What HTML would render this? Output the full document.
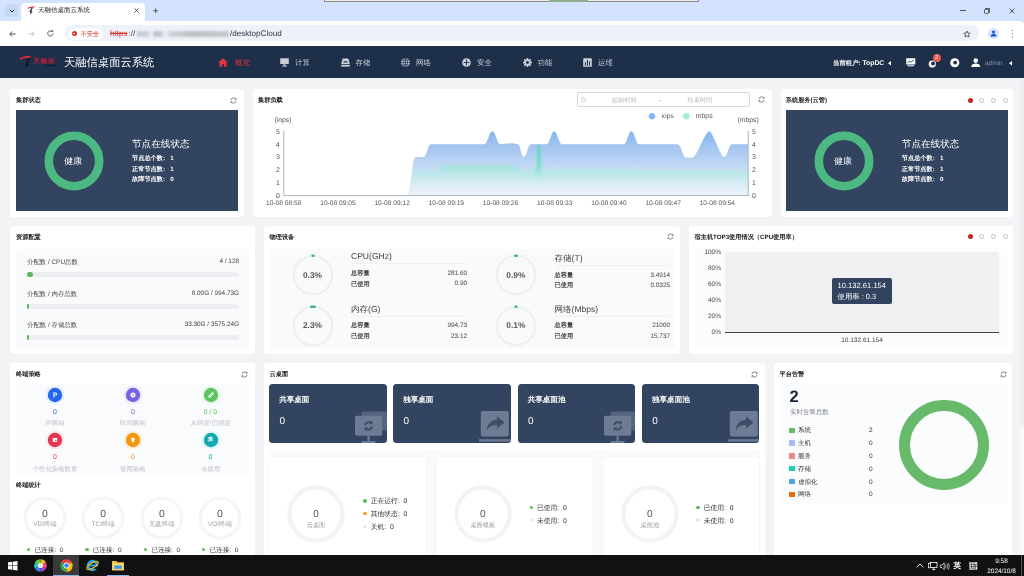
<!DOCTYPE html>
<html><head><meta charset="utf-8">
<style>
*{box-sizing:border-box;margin:0;padding:0}
html,body{width:1024px;height:576px;overflow:hidden;background:#f2f3f5;font-family:"Liberation Sans",sans-serif;text-rendering:geometricPrecision;}
body{position:relative;opacity:0.999}
.abs{position:absolute}
.t{position:absolute;white-space:nowrap;line-height:1;}
.card{position:absolute;background:#fff;border-radius:3px}
.ttl{position:absolute;font-size:6.2px;font-weight:bold;color:#222;white-space:nowrap;line-height:1}
.dark{position:absolute;background:#32445f}
.soft{position:absolute;background:#f9fafb;border-radius:2px}
svg{position:absolute;overflow:visible}
</style></head><body>
<!-- BROWSER CHROME -->
<div class="abs" id="tabbar" style="left:0;top:0;width:1024px;height:22px;background:#d3e3fd"></div>
<div class="abs" style="left:324px;top:0;width:375px;height:2px;background:#eee;border:0.5px solid #888;border-top:0"></div>
<div class="abs" style="left:549px;top:0;width:39px;height:1.5px;background:#8fb08a"></div>
<div class="abs" style="left:5px;top:4px;width:13px;height:13px;border-radius:4px;background:#c5d8f7"></div>
<svg style="left:8.5px;top:8.5px" width="6" height="4" viewBox="0 0 6 4"><path d="M0.8 0.8 L3 3 L5.2 0.8" fill="none" stroke="#333" stroke-width="1"/></svg>
<div class="abs" style="left:21px;top:2.5px;width:124px;height:20px;background:#fff;border-radius:4px 4px 0 0"></div>
<svg style="left:27px;top:6px" width="8" height="9" viewBox="0 0 8 9"><path d="M0.3 2.2 C2 0.8 5 0.3 7.6 0.6 L6.8 1.8 C5.5 1.6 3 1.8 1.2 2.8 Z" fill="#d8232a"/><path d="M4.2 2.2 L5.8 2 L4.2 5 L5.6 5.4 L3 8.8 L3.6 6 L2.4 5.6 Z" fill="#1a2238"/></svg>
<div class="t" style="left:38px;top:8.40px;font-size:6.5px;color:#222">天融信桌面云系统</div>
<svg style="left:134px;top:8px" width="5" height="5" viewBox="0 0 5 5"><path d="M0.5 0.5 L4.5 4.5 M4.5 0.5 L0.5 4.5" stroke="#333" stroke-width="0.8"/></svg>
<svg style="left:152.5px;top:8px" width="5.5" height="5.5" viewBox="0 0 6 6"><path d="M3 0.3 V5.7 M0.3 3 H5.7" stroke="#333" stroke-width="0.8"/></svg>
<!-- window controls -->
<div class="abs" style="left:959.5px;top:10.3px;width:6px;height:0.8px;background:#555"></div>
<svg style="left:984px;top:8px" width="6" height="6" viewBox="0 0 6 6"><rect x="0.5" y="1.4" width="4" height="4" rx="0.8" fill="none" stroke="#333" stroke-width="0.8"/><path d="M1.6 1.2 V0.5 H5.5 V4.4 H4.8" fill="none" stroke="#333" stroke-width="0.8"/></svg>
<svg style="left:1009px;top:8px" width="6" height="6" viewBox="0 0 6 6"><path d="M0.5 0.5 L5.5 5.5 M5.5 0.5 L0.5 5.5" stroke="#333" stroke-width="0.8"/></svg>
<!-- address bar -->
<div class="abs" style="left:0;top:21px;width:1024px;height:25px;background:#fff;border-radius:0 5px 0 0"></div>
<svg style="left:8.5px;top:30.5px" width="7" height="6" viewBox="0 0 7 6"><path d="M6.6 3 H0.8 M3.2 0.5 L0.7 3 L3.2 5.5" fill="none" stroke="#444" stroke-width="0.9"/></svg>
<svg style="left:27.5px;top:30.5px" width="7" height="6" viewBox="0 0 7 6"><path d="M0.4 3 H6.2 M3.8 0.5 L6.3 3 L3.8 5.5" fill="none" stroke="#bbb" stroke-width="0.9"/></svg>
<svg style="left:46.5px;top:30px" width="7" height="7" viewBox="0 0 7 7"><path d="M6 3.5 A2.6 2.6 0 1 1 5.2 1.6" fill="none" stroke="#444" stroke-width="0.9"/><path d="M4 0.4 H6.2 V2.6 Z" fill="#444"/></svg>
<div class="abs" style="left:65px;top:25.2px;width:914px;height:16.2px;border-radius:8px;background:#edf2fa"></div>
<div class="abs" style="left:68px;top:27.5px;width:35px;height:12px;border-radius:6px;background:#fff"></div>
<div class="abs" style="left:71.5px;top:31px;width:5px;height:5px;border-radius:50%;background:#d93025"></div>
<div class="abs" style="left:73.2px;top:32.6px;width:1.6px;height:1.8px;background:#fff;border-radius:50%"></div>
<div class="t" style="left:80.5px;top:32.30px;font-size:6.3px;color:#d93025">不安全</div>
<div class="t" style="left:110px;top:29.8px;font-size:8px;color:#d93025;text-decoration:line-through">https</div>
<div class="t" style="left:128.6px;top:29.6px;font-size:8px;color:#444">://</div>
<div class="abs" style="left:137px;top:31px;width:92px;height:5.5px;filter:blur(1.3px);background:linear-gradient(90deg,#aaa 0,#bbb 12%,#e4e8ee 14%,#e4e8ee 17%,#999 19%,#aaa 27%,#e4e8ee 29%,#e4e8ee 33%,#bbb 35%,#999 60%,#aaa 100%);opacity:.55"></div>
<div class="t" style="left:230px;top:29.5px;font-size:8.1px;color:#333">/desktopCloud</div>
<svg style="left:962.5px;top:29.5px" width="8" height="8" viewBox="0 0 24 24"><path d="M12 3 L14.8 9.2 L21.5 9.9 L16.5 14.4 L17.9 21 L12 17.6 L6.1 21 L7.5 14.4 L2.5 9.9 L9.2 9.2 Z" fill="none" stroke="#333" stroke-width="2.2" stroke-linejoin="round"/></svg>
<div class="abs" style="left:987.5px;top:28px;width:11px;height:11px;border-radius:50%;background:#d3e3fd"></div>
<svg style="left:989.5px;top:30px" width="7" height="7" viewBox="0 0 7 7"><circle cx="3.5" cy="2" r="1.5" fill="#0b57d0"/><path d="M0.6 6.6 C0.6 4.6 2 4 3.5 4 C5 4 6.4 4.6 6.4 6.6 Z" fill="#0b57d0"/></svg>
<div class="abs" style="left:1011.7px;top:29.6px;width:1.4px;height:1.4px;border-radius:50%;background:#444;box-shadow:0 3.3px 0 #444,0 6.6px 0 #444"></div>
<!-- NAV -->
<div class="abs" id="nav" style="left:0;top:45.8px;width:1024px;height:32px;background:#1e2f4a"></div>

<!-- logo -->
<svg style="left:19px;top:55px" width="13" height="13" viewBox="0 0 13 13"><path d="M0.3 3.6 C3 1.4 8 0.4 12.2 0.7 L11 2.7 C8.4 2.5 4.6 3 1.6 4.7 Z" fill="#e0283a"/><path d="M10 2.8 L11.7 2.9 L8.7 8.3 L10.1 8.8 L6.2 12.9 L7.3 9.7 L5.9 9.2 Z" fill="#0c1325"/></svg>
<div class="t" style="left:33.2px;top:58.6px;font-size:6.6px;font-weight:bold;color:#b8213a;letter-spacing:0.7px">天融信</div><div class="abs" style="left:44.5px;top:64.9px;width:10.8px;height:1.5px;background:#0c1325;opacity:.9"></div>
<div class="t" style="left:64px;top:57.50px;font-size:11.3px;color:#fff">天融信桌面云系统</div>
<!-- nav items -->
<svg style="left:217.5px;top:57.5px" width="10" height="9" viewBox="0 0 10 9"><path d="M5 0.2 L9.8 4.4 H8.5 V8.8 H5.9 V6 H4.1 V8.8 H1.5 V4.4 H0.2 Z" fill="#e8343a"/></svg>
<div class="t" style="left:235px;top:58.6px;font-size:7.4px;color:#e8343a">概览</div>
<svg style="left:280px;top:57.5px" width="9" height="9" viewBox="0 0 9 9"><rect x="0.2" y="0.3" width="8.6" height="5.8" rx="0.5" fill="#c9ced8"/><rect x="3.5" y="6.1" width="2" height="1.5" fill="#c9ced8"/><rect x="2" y="7.6" width="5" height="1" fill="#c9ced8"/></svg>
<div class="t" style="left:295px;top:58.6px;font-size:7.4px;color:#c9ced8">计算</div>
<svg style="left:340.5px;top:57.5px" width="9" height="9" viewBox="0 0 9 9"><path d="M1.6 0.4 H7.4 L8.8 6 H0.2 Z" fill="#c9ced8"/><rect x="2.6" y="3.2" width="3.8" height="1.2" fill="#1e2f4a"/><rect x="0.2" y="6.8" width="8.6" height="1.8" fill="#c9ced8"/></svg>
<div class="t" style="left:355.5px;top:58.6px;font-size:7.4px;color:#c9ced8">存储</div>
<svg style="left:401px;top:57.8px" width="9" height="9" viewBox="0 0 9 9"><circle cx="4.5" cy="4.5" r="4.3" fill="#c9ced8"/><path d="M4.5 0.2 V8.8 M0.2 4.5 H8.8 M1.2 2.2 H7.8 M1.2 6.8 H7.8" stroke="#1e2f4a" stroke-width="0.7"/><ellipse cx="4.5" cy="4.5" rx="2" ry="4.3" fill="none" stroke="#1e2f4a" stroke-width="0.7"/></svg>
<div class="t" style="left:416px;top:58.6px;font-size:7.4px;color:#c9ced8">网络</div>
<svg style="left:462px;top:57.8px" width="9" height="9" viewBox="0 0 9 9"><circle cx="4.5" cy="4.5" r="4.3" fill="#c9ced8"/><path d="M4.5 1.6 V7.4 M1.6 4.5 H7.4" stroke="#1e2f4a" stroke-width="0.9"/></svg>
<div class="t" style="left:477px;top:58.6px;font-size:7.4px;color:#c9ced8">安全</div>
<svg style="left:522.5px;top:57.8px" width="9" height="9" viewBox="0 0 9 9"><g fill="#c9ced8"><circle cx="4.5" cy="4.5" r="3.2"/><rect x="3.7" y="0" width="1.6" height="9"/><rect x="0" y="3.7" width="9" height="1.6"/><rect x="3.7" y="0" width="1.6" height="9" transform="rotate(45 4.5 4.5)"/><rect x="3.7" y="0" width="1.6" height="9" transform="rotate(-45 4.5 4.5)"/></g><circle cx="4.5" cy="4.5" r="1.4" fill="#1e2f4a"/></svg>
<div class="t" style="left:537.5px;top:58.6px;font-size:7.4px;color:#c9ced8">功能</div>
<svg style="left:583px;top:57.8px" width="9" height="9" viewBox="0 0 9 9"><rect x="0.2" y="0.2" width="8.6" height="8.6" rx="0.6" fill="#c9ced8"/><path d="M2.4 7.6 V4.2 M4.5 7.6 V2 M6.6 7.6 V3.4" stroke="#1e2f4a" stroke-width="1"/></svg>
<div class="t" style="left:598px;top:58.6px;font-size:7.4px;color:#c9ced8">运维</div>
<!-- nav right -->
<div class="t" style="left:833px;top:61.00px;font-size:6.4px;font-weight:bold;color:#fff">当前租户: <span style="font-size:6.8px">TopDC</span></div>
<svg style="left:887.5px;top:61px" width="3" height="4.5" viewBox="0 0 3 4.5"><path d="M3 0 V4.5 L0 2.25 Z" fill="#fff"/></svg>
<svg style="left:906px;top:58.3px" width="9.5" height="8.5" viewBox="0 0 9.5 8.5"><rect x="0.2" y="0.2" width="9.1" height="6.4" rx="0.6" fill="#fff"/><path d="M1.4 4.8 L3.4 3 L5 4.2 L8 1.8" fill="none" stroke="#1e2f4a" stroke-width="0.8"/><rect x="1.4" y="7.3" width="6.7" height="1" fill="#fff"/></svg>
<svg style="left:927.5px;top:58.5px" width="9" height="9" viewBox="0 0 9 9"><circle cx="4.3" cy="5" r="3.6" fill="#fff"/><circle cx="5" cy="4.4" r="2" fill="#1e2f4a"/></svg>
<div class="abs" style="left:932.6px;top:54.2px;width:8.2px;height:8.2px;border-radius:50%;background:#ee5a52"></div>
<div class="t" style="left:935px;top:55.6px;font-size:5.6px;color:#fff">2</div>
<svg style="left:949.5px;top:58px" width="9.5" height="9.5" viewBox="0 0 10 10"><circle cx="5" cy="5" r="4.8" fill="#fff"/><circle cx="5.4" cy="4.8" r="2" fill="#1e2f4a"/></svg>
<svg style="left:971px;top:57.8px" width="9.5" height="9.5" viewBox="0 0 9.5 9.5"><circle cx="4.75" cy="2.6" r="2.3" fill="#fff"/><path d="M0.3 9 C0.3 6.2 2.4 5.4 4.75 5.4 C7.1 5.4 9.2 6.2 9.2 9 Z" fill="#fff"/></svg>
<div class="t" style="left:985px;top:60.70px;font-size:6.5px;color:#8792a6">admin</div>
<svg style="left:1008.5px;top:61px" width="3" height="4.5" viewBox="0 0 3 4.5"><path d="M3 0 V4.5 L0 2.25 Z" fill="#fff"/></svg>
<!-- scrollbar -->
<div class="abs" style="left:1019.5px;top:78px;width:4.5px;height:477px;background:#f8f9fb"></div>
<div class="abs" style="left:1019.5px;top:78px;width:4.5px;height:349px;background:#eceef2"></div>
<!--ROW1-->

<div class="card" style="left:10px;top:89px;width:234px;height:128px"></div>
<div class="ttl" style="left:16px;top:97.90px">集群状态</div>
<svg style="left:230.0px;top:96.5px" width="7" height="7" viewBox="0 0 14 14"><path d="M2 6.2 A5.1 5.1 0 0 1 11.4 4.2" fill="none" stroke="#444" stroke-width="1.3"/><path d="M12 7.8 A5.1 5.1 0 0 1 2.6 9.8" fill="none" stroke="#444" stroke-width="1.3"/><path d="M12.6 1.6 V5 H9.2 Z" fill="#444"/><path d="M1.4 12.4 V9 H4.8 Z" fill="#444"/></svg>

<div class="dark" style="left:16px;top:110px;width:222px;height:100.5px"></div>
<svg style="left:43.8px;top:130.5px" width="60" height="60" viewBox="0 0 60 60"><circle cx="30" cy="30" r="25.2" fill="none" stroke="#4cb982" stroke-width="8.6"/></svg>
<div class="t" style="left:64.3px;top:156.90px;font-size:9px;color:#fff">健康</div>
<div class="t" style="left:132px;top:139.70px;font-size:9.6px;color:#fff">节点在线状态</div>
<div class="t" style="left:132px;top:155.90px;font-size:6.2px;font-weight:bold;color:#fff">节点总个数: &nbsp;&nbsp;1</div>
<div class="t" style="left:132px;top:166.50px;font-size:6.2px;font-weight:bold;color:#fff">正常节点数: &nbsp;&nbsp;1</div>
<div class="t" style="left:132px;top:177.10px;font-size:6.2px;font-weight:bold;color:#fff">故障节点数: &nbsp;&nbsp;0</div>

<div class="card" style="left:252.5px;top:89px;width:519.5px;height:128px"></div>
<div class="ttl" style="left:258px;top:97.90px">集群负载</div>
<div class="abs" style="left:577.2px;top:92.2px;width:173.3px;height:15.2px;border:0.7px solid #d4d7de;border-radius:2px;background:#fff"></div>
<svg style="left:580.6px;top:97.2px" width="5.4" height="5.4" viewBox="0 0 10 10"><circle cx="5" cy="5" r="4.3" fill="none" stroke="#b5b8be" stroke-width="1"/><path d="M5 2.4 V5.2 L6.8 6.2" fill="none" stroke="#b5b8be" stroke-width="1"/></svg>
<div class="t" style="left:612px;top:97.9px;font-size:6.2px;color:#b0b3b9">起始时间</div>
<div class="t" style="left:659px;top:97.7px;font-size:6.2px;color:#666">-</div>
<div class="t" style="left:687.5px;top:97.9px;font-size:6.2px;color:#b0b3b9">结束时间</div>
<svg style="left:758.0px;top:96.3px" width="7" height="7" viewBox="0 0 14 14"><path d="M2 6.2 A5.1 5.1 0 0 1 11.4 4.2" fill="none" stroke="#444" stroke-width="1.3"/><path d="M12 7.8 A5.1 5.1 0 0 1 2.6 9.8" fill="none" stroke="#444" stroke-width="1.3"/><path d="M12.6 1.6 V5 H9.2 Z" fill="#444"/><path d="M1.4 12.4 V9 H4.8 Z" fill="#444"/></svg>
<svg style="left:0;top:0" width="1024" height="576" viewBox="0 0 1024 576">
<defs>
<linearGradient id="gi" x1="0" y1="0" x2="0" y2="1" gradientUnits="userSpaceOnUse"><stop offset="0" stop-color="#7fb0f0" stop-opacity="0"/></linearGradient>
<clipPath id="ci"><path d="M407.4 195.6 C410.8 195.6 412.1 157.05 415.5 157.05 L423.7 157.05 C426.68 157.05 427.82 144.2 430.8 144.2 L484.4 144.2 C487.72 144.2 488.98 131.35 492.3 131.35 C495.62 131.35 496.88 144.2 500.2 144.2 C502.91 144.2 509.79 143.17 512.5 143.17 C514.81 143.17 515.69 144.2 518 144.2 C520.35 144.2 521.25 157.05 523.6 157.05 C526.71 157.05 527.89 144.2 531 144.2 L546.8 144.2 C549.91 144.2 551.09 131.35 554.2 131.35 C557.35 131.35 558.55 144.2 561.7 144.2 L624 144.2 C627.07 144.2 628.23 131.35 631.3 131.35 C634.49 131.35 635.71 144.2 638.9 144.2 L677.6 144.2 C681.25 144.2 682.65 157.69 686.3 157.69 L692.5 157.69 C696.17 157.69 705.53 131.35 709.2 131.35 C712.48 131.35 720.82 157.05 724.1 157.05 C727.42 157.05 728.68 144.2 732 144.2 L747.9 144.2 L747.9 195.6 L407.4 195.6 Z"/></clipPath><filter id="bl" x="-5%" y="-20%" width="110%" height="140%"><feGaussianBlur stdDeviation="1.6 1.8"/></filter>
<linearGradient id="gI" x1="0" y1="131" x2="0" y2="195.6" gradientUnits="userSpaceOnUse"><stop offset="0" stop-color="#86b5ee"/><stop offset="0.25" stop-color="#a3c5f0"/><stop offset="0.55" stop-color="#c3d9f4"/><stop offset="1" stop-color="#e7eff8"/></linearGradient>
<linearGradient id="gS" x1="0" y1="143" x2="0" y2="184" gradientUnits="userSpaceOnUse"><stop offset="0" stop-color="#55d2ba" stop-opacity="0.95"/><stop offset="0.6" stop-color="#7fe0cc" stop-opacity="0.6"/><stop offset="1" stop-color="#a8ecd9" stop-opacity="0"/></linearGradient>
<linearGradient id="gM" x1="0" y1="144" x2="0" y2="195.6" gradientUnits="userSpaceOnUse"><stop offset="0" stop-color="#45ccb0" stop-opacity="0.95"/><stop offset="0.42" stop-color="#8fe8d0" stop-opacity="0.7"/><stop offset="0.7" stop-color="#c9f2ea" stop-opacity="0.5"/><stop offset="1" stop-color="#ffffff" stop-opacity="0.25"/></linearGradient>
</defs>
<path d="M407.4 195.6 C410.8 195.6 412.1 157.05 415.5 157.05 L423.7 157.05 C426.68 157.05 427.82 144.2 430.8 144.2 L484.4 144.2 C487.72 144.2 488.98 131.35 492.3 131.35 C495.62 131.35 496.88 144.2 500.2 144.2 C502.91 144.2 509.79 143.17 512.5 143.17 C514.81 143.17 515.69 144.2 518 144.2 C520.35 144.2 521.25 157.05 523.6 157.05 C526.71 157.05 527.89 144.2 531 144.2 L546.8 144.2 C549.91 144.2 551.09 131.35 554.2 131.35 C557.35 131.35 558.55 144.2 561.7 144.2 L624 144.2 C627.07 144.2 628.23 131.35 631.3 131.35 C634.49 131.35 635.71 144.2 638.9 144.2 L677.6 144.2 C681.25 144.2 682.65 157.69 686.3 157.69 L692.5 157.69 C696.17 157.69 705.53 131.35 709.2 131.35 C712.48 131.35 720.82 157.05 724.1 157.05 C727.42 157.05 728.68 144.2 732 144.2 L747.9 144.2 L747.9 195.6 L407.4 195.6 Z" fill="url(#gI)"/>
<g clip-path="url(#ci)"><path d="M407.4 195.6 C411.01 195.6 412.39 171.19 416 171.19 C420.4 171.19 431.6 169.9 436 169.9 C440.2 169.9 441.8 165.4 446 165.4 L512 165.4 C516.2 165.4 517.8 169.9 522 169.9 L534.8 169.9 C536.52 169.9 537.18 142.91 538.9 142.91 C540.62 142.91 541.28 169.9 543 169.9 C555.54 169.9 587.46 169.26 600 169.26 C617.6 169.26 662.4 170.54 680 170.54 L747.9 170.54 L747.9 195.6 L407.4 195.6 Z" fill="url(#gM)" filter="url(#bl)"/></g>
<path d="M535.2 172 C537.4 168 538 150 538.9 143.6 C539.8 150 540.6 168 543 176 L543 184 L535.2 184 Z" fill="url(#gS)"/>
<path d="M283.8 131 V195.6 H748.2 V131" fill="none" stroke="#aab5bf" stroke-width="1"/>
<g stroke="#a9b3bd" stroke-width="0.6"><path d="M748.2 195.6 h1.6"/><path d="M748.2 182.75 h1.6"/><path d="M748.2 169.9 h1.6"/><path d="M748.2 157.05 h1.6"/><path d="M748.2 144.2 h1.6"/><path d="M748.2 131.35 h1.6"/></g>
<line x1="646" y1="116.2" x2="658" y2="116.2" stroke="#d4e3f8" stroke-width="0.7"/><circle cx="652" cy="116.2" r="3.2" fill="#8ab6f1"/>
<line x1="680.3" y1="116.2" x2="692.3" y2="116.2" stroke="#d9f5ec" stroke-width="0.7"/><circle cx="686.3" cy="116.2" r="3.2" fill="#a5ead2"/>
</svg>
<div class="t" style="left:661.5px;top:113.90px;font-size:6.7px;color:#555">iops</div>
<div class="t" style="left:695.8px;top:113.90px;font-size:6.9px;color:#555">mbps</div>
<div class="t" style="left:274.5px;top:118.20px;font-size:6.8px;color:#555">(iops)</div>
<div class="t" style="left:737.5px;top:118.20px;font-size:6.8px;color:#555">(mbps)</div>
<div class="t" style="left:276px;top:193.90px;font-size:6.9px;color:#555">0</div><div class="t" style="left:752px;top:193.90px;font-size:6.9px;color:#555">0</div>
<div class="t" style="left:276px;top:181.05px;font-size:6.9px;color:#555">1</div><div class="t" style="left:752px;top:181.05px;font-size:6.9px;color:#555">1</div>
<div class="t" style="left:276px;top:168.20px;font-size:6.9px;color:#555">2</div><div class="t" style="left:752px;top:168.20px;font-size:6.9px;color:#555">2</div>
<div class="t" style="left:276px;top:155.35px;font-size:6.9px;color:#555">3</div><div class="t" style="left:752px;top:155.35px;font-size:6.9px;color:#555">3</div>
<div class="t" style="left:276px;top:142.50px;font-size:6.9px;color:#555">4</div><div class="t" style="left:752px;top:142.50px;font-size:6.9px;color:#555">4</div>
<div class="t" style="left:276px;top:129.65px;font-size:6.9px;color:#555">5</div><div class="t" style="left:752px;top:129.65px;font-size:6.9px;color:#555">5</div>
<div class="t" style="left:253.75px;width:60px;text-align:center;top:200.7px;font-size:6.65px;color:#555">10-08 08:58</div>
<div class="t" style="left:307.95px;width:60px;text-align:center;top:200.7px;font-size:6.65px;color:#555">10-08 09:05</div>
<div class="t" style="left:362.15px;width:60px;text-align:center;top:200.7px;font-size:6.65px;color:#555">10-08 09:12</div>
<div class="t" style="left:416.35px;width:60px;text-align:center;top:200.7px;font-size:6.65px;color:#555">10-08 09:19</div>
<div class="t" style="left:470.55px;width:60px;text-align:center;top:200.7px;font-size:6.65px;color:#555">10-08 09:26</div>
<div class="t" style="left:524.75px;width:60px;text-align:center;top:200.7px;font-size:6.65px;color:#555">10-08 09:33</div>
<div class="t" style="left:578.95px;width:60px;text-align:center;top:200.7px;font-size:6.65px;color:#555">10-08 09:40</div>
<div class="t" style="left:633.15px;width:60px;text-align:center;top:200.7px;font-size:6.65px;color:#555">10-08 09:47</div>
<div class="t" style="left:687.35px;width:60px;text-align:center;top:200.7px;font-size:6.65px;color:#555">10-08 09:54</div>

<div class="card" style="left:780.5px;top:89px;width:232px;height:128px"></div>
<div class="ttl" style="left:785.8px;top:97.90px">系统服务(云管)</div>
<div class="abs" style="left:967.5px;top:97.5px;width:5px;height:5px;border-radius:50%;background:#c0272d"></div>
<div class="abs" style="left:979px;top:97.5px;width:5px;height:5px;border-radius:50%;border:0.6px solid #bbb;background:#fff"></div>
<div class="abs" style="left:991px;top:97.5px;width:5px;height:5px;border-radius:50%;border:0.6px solid #bbb;background:#fff"></div>
<div class="abs" style="left:1002.5px;top:97.5px;width:5px;height:5px;border-radius:50%;border:0.6px solid #bbb;background:#fff"></div>

<div class="dark" style="left:785.8px;top:110px;width:222px;height:100.5px"></div>
<svg style="left:813.5999999999999px;top:130.5px" width="60" height="60" viewBox="0 0 60 60"><circle cx="30" cy="30" r="25.2" fill="none" stroke="#4cb982" stroke-width="8.6"/></svg>
<div class="t" style="left:834.0999999999999px;top:156.90px;font-size:9px;color:#fff">健康</div>
<div class="t" style="left:901.8px;top:139.70px;font-size:9.6px;color:#fff">节点在线状态</div>
<div class="t" style="left:901.8px;top:155.90px;font-size:6.2px;font-weight:bold;color:#fff">节点总个数: &nbsp;&nbsp;1</div>
<div class="t" style="left:901.8px;top:166.50px;font-size:6.2px;font-weight:bold;color:#fff">正常节点数: &nbsp;&nbsp;1</div>
<div class="t" style="left:901.8px;top:177.10px;font-size:6.2px;font-weight:bold;color:#fff">故障节点数: &nbsp;&nbsp;0</div>

<!--ROW2-->

<div class="card" style="left:10px;top:226px;width:244.5px;height:128px"></div>
<div class="ttl" style="left:16px;top:235.10px">资源配置</div>
<div class="soft" style="left:16px;top:248.5px;width:232.5px;height:100px"></div>
<div class="t" style="left:27px;top:260.00px;font-size:6.4px;color:#444">分配数 / CPU总数</div>
<div class="t" style="left:139px;width:100px;text-align:right;top:259.40px;font-size:6.4px;color:#444">4 / 128</div>
<div class="abs" style="left:27px;top:272.2px;width:212px;height:5px;border-radius:2.5px;background:#eceef1"></div>
<div class="abs" style="left:27px;top:272.2px;width:6px;height:5px;border-radius:2.5px;background:#5cb85c"></div>
<div class="t" style="left:27px;top:291.50px;font-size:6.4px;color:#444">分配数 / 内存总数</div>
<div class="t" style="left:139px;width:100px;text-align:right;top:290.90px;font-size:6.4px;color:#444">8.00G / 994.73G</div>
<div class="abs" style="left:27px;top:303.7px;width:212px;height:5px;border-radius:2.5px;background:#eceef1"></div>
<div class="abs" style="left:27px;top:303.7px;width:2px;height:5px;border-radius:2.5px;background:#5cb85c"></div>
<div class="t" style="left:27px;top:323.00px;font-size:6.4px;color:#444">分配数 / 存储总数</div>
<div class="t" style="left:139px;width:100px;text-align:right;top:322.40px;font-size:6.4px;color:#444">33.30G / 3575.24G</div>
<div class="abs" style="left:27px;top:335.2px;width:212px;height:5px;border-radius:2.5px;background:#eceef1"></div>
<div class="abs" style="left:27px;top:335.2px;width:2px;height:5px;border-radius:2.5px;background:#5cb85c"></div>

<div class="card" style="left:264px;top:226px;width:416px;height:128px"></div>
<div class="ttl" style="left:269.5px;top:235.10px">物理设备</div>
<svg style="left:667.0px;top:233.0px" width="7" height="7" viewBox="0 0 14 14"><path d="M2 6.2 A5.1 5.1 0 0 1 11.4 4.2" fill="none" stroke="#444" stroke-width="1.3"/><path d="M12 7.8 A5.1 5.1 0 0 1 2.6 9.8" fill="none" stroke="#444" stroke-width="1.3"/><path d="M12.6 1.6 V5 H9.2 Z" fill="#444"/><path d="M1.4 12.4 V9 H4.8 Z" fill="#444"/></svg>
<div class="soft" style="left:269.5px;top:248.5px;width:405px;height:100px"></div>
<svg style="left:291.5px;top:254px" width="42" height="42" viewBox="0 0 42 42"><circle cx="21" cy="21" r="19.2" fill="none" stroke="#eef0f2" stroke-width="2.3"/><path d="M20.6 1.8 L21.4 1.8" fill="none" stroke="#3cb38a" stroke-width="2.6" stroke-linecap="round"/></svg>
<div class="t" style="left:292.5px;width:40px;text-align:center;top:271px;font-size:8.4px;font-weight:bold;color:#555">0.3%</div>
<div class="t" style="left:351px;top:251.7px;font-size:8.55px;color:#444">CPU(GHz)</div>
<div class="abs" style="left:351px;top:263.1px;width:116px;height:0.6px;background:#eff0f2"></div>
<div class="t" style="left:351px;top:271.10px;font-size:6.2px;font-weight:bold;color:#444">总容量</div>
<div class="t" style="left:351px;top:281.60px;font-size:6.2px;font-weight:bold;color:#444">已使用</div>
<div class="t" style="left:407px;width:60px;text-align:right;top:270.90px;font-size:6.4px;color:#444">281.60</div>
<div class="t" style="left:407px;width:60px;text-align:right;top:281.40px;font-size:6.4px;color:#444">0.90</div>
<svg style="left:291.5px;top:304.5px" width="42" height="42" viewBox="0 0 42 42"><circle cx="21" cy="21" r="19.2" fill="none" stroke="#eef0f2" stroke-width="2.3"/><path d="M19.4 1.8 L22.6 1.8" fill="none" stroke="#3cb38a" stroke-width="2.6" stroke-linecap="round"/></svg>
<div class="t" style="left:292.5px;width:40px;text-align:center;top:320.70px;font-size:8.4px;font-weight:bold;color:#555">2.3%</div>
<div class="t" style="left:351px;top:304.90px;font-size:8.55px;color:#444">内存(G)</div>
<div class="abs" style="left:351px;top:315.6px;width:116px;height:0.6px;background:#eff0f2"></div>
<div class="t" style="left:351px;top:323.30px;font-size:6.2px;font-weight:bold;color:#444">总容量</div>
<div class="t" style="left:351px;top:334.10px;font-size:6.2px;font-weight:bold;color:#444">已使用</div>
<div class="t" style="left:407px;width:60px;text-align:right;top:323.10px;font-size:6.4px;color:#444">994.73</div>
<div class="t" style="left:407px;width:60px;text-align:right;top:333.90px;font-size:6.4px;color:#444">23.12</div>
<svg style="left:494.79999999999995px;top:254px" width="42" height="42" viewBox="0 0 42 42"><circle cx="21" cy="21" r="19.2" fill="none" stroke="#eef0f2" stroke-width="2.3"/><path d="M20.4 1.8 L21.6 1.8" fill="none" stroke="#3cb38a" stroke-width="2.6" stroke-linecap="round"/></svg>
<div class="t" style="left:495.79999999999995px;width:40px;text-align:center;top:271px;font-size:8.4px;font-weight:bold;color:#555">0.9%</div>
<div class="t" style="left:554.5px;top:253.7px;font-size:8.55px;color:#444">存储(T)</div>
<div class="abs" style="left:554.5px;top:265.1px;width:115.5px;height:0.6px;background:#eff0f2"></div>
<div class="t" style="left:554.5px;top:272.90px;font-size:6.2px;font-weight:bold;color:#444">总容量</div>
<div class="t" style="left:554.5px;top:283.10px;font-size:6.2px;font-weight:bold;color:#444">已使用</div>
<div class="t" style="left:610px;width:60px;text-align:right;top:272.70px;font-size:6.4px;color:#444">3.4914</div>
<div class="t" style="left:610px;width:60px;text-align:right;top:282.90px;font-size:6.4px;color:#444">0.0325</div>
<svg style="left:494.79999999999995px;top:304.5px" width="42" height="42" viewBox="0 0 42 42"><circle cx="21" cy="21" r="19.2" fill="none" stroke="#eef0f2" stroke-width="2.3"/><path d="M20.7 1.8 L21.3 1.8" fill="none" stroke="#3cb38a" stroke-width="2.6" stroke-linecap="round"/></svg>
<div class="t" style="left:495.79999999999995px;width:40px;text-align:center;top:320.70px;font-size:8.4px;font-weight:bold;color:#555">0.1%</div>
<div class="t" style="left:554.5px;top:304.90px;font-size:8.55px;color:#444">网络(Mbps)</div>
<div class="abs" style="left:554.5px;top:315.6px;width:115.5px;height:0.6px;background:#eff0f2"></div>
<div class="t" style="left:554.5px;top:323.30px;font-size:6.2px;font-weight:bold;color:#444">总容量</div>
<div class="t" style="left:554.5px;top:334.10px;font-size:6.2px;font-weight:bold;color:#444">已使用</div>
<div class="t" style="left:610px;width:60px;text-align:right;top:323.10px;font-size:6.4px;color:#444">21000</div>
<div class="t" style="left:610px;width:60px;text-align:right;top:333.90px;font-size:6.4px;color:#444">15.737</div>

<div class="card" style="left:689px;top:226px;width:323.5px;height:128px"></div>
<div class="ttl" style="left:694.5px;top:235.10px">宿主机TOP3使用情况（CPU使用率）</div>
<div class="abs" style="left:967.5px;top:233.8px;width:5px;height:5px;border-radius:50%;background:#c0272d"></div>
<div class="abs" style="left:979px;top:233.8px;width:5px;height:5px;border-radius:50%;border:0.6px solid #bbb;background:#fff"></div>
<div class="abs" style="left:991px;top:233.8px;width:5px;height:5px;border-radius:50%;border:0.6px solid #bbb;background:#fff"></div>
<div class="abs" style="left:1002.5px;top:233.8px;width:5px;height:5px;border-radius:50%;border:0.6px solid #bbb;background:#fff"></div>
<div class="soft" style="left:694.5px;top:248.5px;width:312.5px;height:100px;background:#fbfcfd"></div>
<div class="abs" style="left:725px;top:252px;width:273.5px;height:80.3px;background:#eff0f2"></div>
<div class="abs" style="left:725px;top:332.2px;width:273.5px;height:0.8px;background:#444"></div>
<div class="t" style="left:690px;width:31px;text-align:right;top:249.60px;font-size:6.5px;color:#444">100%</div>
<div class="t" style="left:690px;width:31px;text-align:right;top:265.60px;font-size:6.5px;color:#444">80%</div>
<div class="t" style="left:690px;width:31px;text-align:right;top:281.60px;font-size:6.5px;color:#444">60%</div>
<div class="t" style="left:690px;width:31px;text-align:right;top:297.60px;font-size:6.5px;color:#444">40%</div>
<div class="t" style="left:690px;width:31px;text-align:right;top:313.60px;font-size:6.5px;color:#444">20%</div>
<div class="t" style="left:690px;width:31px;text-align:right;top:329.60px;font-size:6.5px;color:#444">0%</div>
<div class="abs" style="left:832px;top:277.8px;width:60px;height:26.4px;border-radius:2px;background:#32445f"></div>
<div class="t" style="left:837.5px;top:282.00px;font-size:7.6px;color:#fff">10.132.61.154</div>
<div class="t" style="left:837.5px;top:293.00px;font-size:7.4px;color:#fff">使用率 : 0.3</div>
<div class="t" style="left:832px;width:60px;text-align:center;top:337.8px;font-size:6.5px;color:#444">10.132.61.154</div>
<!--ROW3-->

<div class="card" style="left:10px;top:362.5px;width:244.5px;height:200px"></div>
<div class="ttl" style="left:16px;top:371.90px">终端策略</div>
<svg style="left:241.2px;top:370.5px" width="7" height="7" viewBox="0 0 14 14"><path d="M2 6.2 A5.1 5.1 0 0 1 11.4 4.2" fill="none" stroke="#444" stroke-width="1.3"/><path d="M12 7.8 A5.1 5.1 0 0 1 2.6 9.8" fill="none" stroke="#444" stroke-width="1.3"/><path d="M12.6 1.6 V5 H9.2 Z" fill="#444"/><path d="M1.4 12.4 V9 H4.8 Z" fill="#444"/></svg>
<div class="soft" style="left:16px;top:384px;width:232.5px;height:90.5px;background:#fafbfc"></div>
<svg style="left:44px;top:384px" width="22" height="22" viewBox="-11 -11 22 22"><circle r="9.6" fill="#d6e3fd" opacity="0.5"/><circle r="7.2" fill="#2468f2"/><path d="M-1.6 -2.4 H0.6 A1.5 1.5 0 0 1 0.6 0.6 H-0.6 V2.4 H-1.6 Z M-0.6 -1.5 V-0.3 H0.5 A0.6 0.6 0 0 0 0.5 -1.5 Z" fill="#fff"/></svg>
<div class="t" style="left:25px;width:60px;text-align:center;top:409.6px;font-size:6.9px;color:#2468f2">0</div>
<div class="t" style="left:15px;width:80px;text-align:center;top:421.10px;font-size:6.4px;color:#bcbfc4">IP限制</div>
<svg style="left:121.80000000000001px;top:384px" width="22" height="22" viewBox="-11 -11 22 22"><circle r="9.6" fill="#e4defb" opacity="0.5"/><circle r="7.2" fill="#7b61e8"/><circle r="2.5" fill="#fff"/><path d="M0 -1.4 V0.2 L1 0.8" stroke="#7b61e8" stroke-width="0.7" fill="none"/></svg>
<div class="t" style="left:102.80000000000001px;width:60px;text-align:center;top:409.6px;font-size:6.9px;color:#7b61e8">0</div>
<div class="t" style="left:92.80000000000001px;width:80px;text-align:center;top:421.10px;font-size:6.4px;color:#bcbfc4">时间限制</div>
<svg style="left:199.5px;top:384px" width="22" height="22" viewBox="-11 -11 22 22"><circle r="9.6" fill="#d9f4da" opacity="0.5"/><circle r="7.2" fill="#5ec462"/><path d="M-1.6 1.6 L1.6 -1.6" stroke="#fff" stroke-width="2.2" stroke-linecap="round"/><path d="M-1.4 1.4 L1.4 -1.4" stroke="#5ec462" stroke-width="0.7" stroke-linecap="round"/></svg>
<div class="t" style="left:180.5px;width:60px;text-align:center;top:409.6px;font-size:6.9px;color:#5ec462">0 / 0</div>
<div class="t" style="left:170.5px;width:80px;text-align:center;top:421.10px;font-size:6.4px;color:#bcbfc4">未绑定/已绑定</div>
<svg style="left:44px;top:429.3px" width="22" height="22" viewBox="-11 -11 22 22"><circle r="9.6" fill="#fbd9de" opacity="0.5"/><circle r="7.2" fill="#e8364f"/><rect x="-2.2" y="-2" width="4.4" height="4" rx="0.5" fill="#fff"/><rect x="0.2" y="-0.2" width="1.4" height="1.4" fill="#e8364f"/></svg>
<div class="t" style="left:25px;width:60px;text-align:center;top:455px;font-size:6.9px;color:#e8364f">0</div>
<div class="t" style="left:15px;width:80px;text-align:center;top:466.80px;font-size:6.4px;color:#bcbfc4">个性化策略数量</div>
<svg style="left:121.80000000000001px;top:429.3px" width="22" height="22" viewBox="-11 -11 22 22"><circle r="9.6" fill="#fde8c8" opacity="0.5"/><circle r="7.2" fill="#f5960f"/><circle cy="-0.6" r="1.8" fill="#fff"/><rect x="-0.9" y="0.8" width="1.8" height="1.6" fill="#fff"/></svg>
<div class="t" style="left:102.80000000000001px;width:60px;text-align:center;top:455px;font-size:6.9px;color:#f5960f">0</div>
<div class="t" style="left:92.80000000000001px;width:80px;text-align:center;top:466.80px;font-size:6.4px;color:#bcbfc4">使用策略</div>
<svg style="left:199.5px;top:429.3px" width="22" height="22" viewBox="-11 -11 22 22"><circle r="9.6" fill="#cdeff1" opacity="0.5"/><circle r="7.2" fill="#12a8b0"/></svg><div class="t" style="left:204.5px;width:12px;text-align:center;top:438.4px;font-size:5.6px;font-weight:bold;color:#fff">未</div>
<div class="t" style="left:180.5px;width:60px;text-align:center;top:455px;font-size:6.9px;color:#12a8b0">0</div>
<div class="t" style="left:170.5px;width:80px;text-align:center;top:466.80px;font-size:6.4px;color:#bcbfc4">未使用</div>
<div class="ttl" style="left:16px;top:483.00px">终端统计</div>
<svg style="left:23px;top:495.5px" width="44" height="44" viewBox="-22 -22 44 44"><circle r="19.8" fill="none" stroke="#f3f5f7" stroke-width="3.2"/></svg>
<div class="t" style="left:25px;width:40px;text-align:center;top:510px;font-size:10.4px;color:#555">0</div>
<div class="t" style="left:25px;width:40px;text-align:center;top:522.4px;font-size:6.45px;color:#9da1a8">VDI终端</div>
<div class="abs" style="left:27.2px;top:548px;width:3.2px;height:3.2px;border-radius:50%;background:#5cb85c"></div>
<div class="t" style="left:34.5px;top:547.80px;font-size:6.6px;color:#333">已连接: &nbsp;0</div>
<svg style="left:81.2px;top:495.5px" width="44" height="44" viewBox="-22 -22 44 44"><circle r="19.8" fill="none" stroke="#f3f5f7" stroke-width="3.2"/></svg>
<div class="t" style="left:83.2px;width:40px;text-align:center;top:510px;font-size:10.4px;color:#555">0</div>
<div class="t" style="left:83.2px;width:40px;text-align:center;top:522.4px;font-size:6.45px;color:#9da1a8">TCI终端</div>
<div class="abs" style="left:85.4px;top:548px;width:3.2px;height:3.2px;border-radius:50%;background:#5cb85c"></div>
<div class="t" style="left:92.7px;top:547.80px;font-size:6.6px;color:#333">已连接: &nbsp;0</div>
<svg style="left:139.8px;top:495.5px" width="44" height="44" viewBox="-22 -22 44 44"><circle r="19.8" fill="none" stroke="#f3f5f7" stroke-width="3.2"/></svg>
<div class="t" style="left:141.8px;width:40px;text-align:center;top:510px;font-size:10.4px;color:#555">0</div>
<div class="t" style="left:141.8px;width:40px;text-align:center;top:522.4px;font-size:6.45px;color:#9da1a8">无盘终端</div>
<div class="abs" style="left:144.0px;top:548px;width:3.2px;height:3.2px;border-radius:50%;background:#5cb85c"></div>
<div class="t" style="left:151.3px;top:547.80px;font-size:6.6px;color:#333">已连接: &nbsp;0</div>
<svg style="left:198px;top:495.5px" width="44" height="44" viewBox="-22 -22 44 44"><circle r="19.8" fill="none" stroke="#f3f5f7" stroke-width="3.2"/></svg>
<div class="t" style="left:200px;width:40px;text-align:center;top:510px;font-size:10.4px;color:#555">0</div>
<div class="t" style="left:200px;width:40px;text-align:center;top:522.4px;font-size:6.45px;color:#9da1a8">VOI终端</div>
<div class="abs" style="left:202.2px;top:548px;width:3.2px;height:3.2px;border-radius:50%;background:#5cb85c"></div>
<div class="t" style="left:209.5px;top:547.80px;font-size:6.6px;color:#333">已连接: &nbsp;0</div>

<div class="card" style="left:264px;top:362.5px;width:501px;height:200px"></div>
<div class="ttl" style="left:269.5px;top:371.90px">云桌面</div>
<svg style="left:751.0px;top:370.5px" width="7" height="7" viewBox="0 0 14 14"><path d="M2 6.2 A5.1 5.1 0 0 1 11.4 4.2" fill="none" stroke="#444" stroke-width="1.3"/><path d="M12 7.8 A5.1 5.1 0 0 1 2.6 9.8" fill="none" stroke="#444" stroke-width="1.3"/><path d="M12.6 1.6 V5 H9.2 Z" fill="#444"/><path d="M1.4 12.4 V9 H4.8 Z" fill="#444"/></svg>
<div class="soft" style="left:269px;top:450px;width:490.5px;height:110px;background:#f9fafb"></div>
<div class="dark" style="left:269px;top:384.3px;width:117.6px;height:58.6px;border-radius:3.5px;overflow:hidden"><svg style="left:86px;top:26.5px" width="34" height="32" viewBox="0 0 34 32"><rect x="6.5" y="0.5" width="26.5" height="19" rx="1.6" fill="#56647f"/><rect x="0" y="4.8" width="27.2" height="20" rx="1.8" fill="#6e7b95"/><rect x="12.5" y="24.8" width="2.2" height="6" fill="#6e7b95"/><g transform="translate(13.6 14.8)" fill="none" stroke="#3f4d69" stroke-width="2.1"><path d="M-3.6 -0.8 A3.8 3.8 0 0 1 3 -2.4"/><path d="M3.6 0.8 A3.8 3.8 0 0 1 -3 2.4"/></g><path d="M17.6 9.4 V13.2 H13.8 Z" fill="#3f4d69"/><path d="M9.6 20.2 V16.4 H13.4 Z" fill="#3f4d69"/><rect x="6.5" y="30" width="14" height="2" fill="#6e7b95"/></svg></div>
<div class="t" style="left:279.2px;top:395.80px;font-size:7.55px;font-weight:bold;color:#fff">共享桌面</div>
<div class="t" style="left:279.4px;top:417.3px;font-size:10px;color:#fff">0</div>
<div class="dark" style="left:393px;top:384.3px;width:117.6px;height:58.6px;border-radius:3.5px;overflow:hidden"><svg style="left:86.2px;top:26.4px" width="32" height="32" viewBox="0 0 32 32"><rect x="1.8" y="0" width="28" height="25.5" rx="2" fill="#6e7b95"/><path d="M18 5.2 L25.4 11.4 L18 17.6 V14 C13 14 10 15.6 7.6 19.6 C8 13.6 11.4 9.4 18 8.8 Z" fill="#3f4d69"/><rect x="0" y="28.2" width="32" height="2.4" fill="#6e7b95"/></svg></div>
<div class="t" style="left:403.2px;top:395.80px;font-size:7.55px;font-weight:bold;color:#fff">独享桌面</div>
<div class="t" style="left:403.4px;top:417.3px;font-size:10px;color:#fff">0</div>
<div class="dark" style="left:517.5px;top:384.3px;width:117.6px;height:58.6px;border-radius:3.5px;overflow:hidden"><svg style="left:86px;top:26.5px" width="34" height="32" viewBox="0 0 34 32"><rect x="6.5" y="0.5" width="26.5" height="19" rx="1.6" fill="#56647f"/><rect x="0" y="4.8" width="27.2" height="20" rx="1.8" fill="#6e7b95"/><rect x="12.5" y="24.8" width="2.2" height="6" fill="#6e7b95"/><g transform="translate(13.6 14.8)" fill="none" stroke="#3f4d69" stroke-width="2.1"><path d="M-3.6 -0.8 A3.8 3.8 0 0 1 3 -2.4"/><path d="M3.6 0.8 A3.8 3.8 0 0 1 -3 2.4"/></g><path d="M17.6 9.4 V13.2 H13.8 Z" fill="#3f4d69"/><path d="M9.6 20.2 V16.4 H13.4 Z" fill="#3f4d69"/><rect x="6.5" y="30" width="14" height="2" fill="#6e7b95"/></svg></div>
<div class="t" style="left:527.7px;top:395.80px;font-size:7.55px;font-weight:bold;color:#fff">共享桌面池</div>
<div class="t" style="left:527.9px;top:417.3px;font-size:10px;color:#fff">0</div>
<div class="dark" style="left:641.8px;top:384.3px;width:117.6px;height:58.6px;border-radius:3.5px;overflow:hidden"><svg style="left:86.2px;top:26.4px" width="32" height="32" viewBox="0 0 32 32"><rect x="1.8" y="0" width="28" height="25.5" rx="2" fill="#6e7b95"/><path d="M18 5.2 L25.4 11.4 L18 17.6 V14 C13 14 10 15.6 7.6 19.6 C8 13.6 11.4 9.4 18 8.8 Z" fill="#3f4d69"/><rect x="0" y="28.2" width="32" height="2.4" fill="#6e7b95"/></svg></div>
<div class="t" style="left:652.0px;top:395.80px;font-size:7.55px;font-weight:bold;color:#fff">独享桌面池</div>
<div class="t" style="left:652.1999999999999px;top:417.3px;font-size:10px;color:#fff">0</div>
<div class="abs" style="left:269px;top:457px;width:156.8px;height:110px;background:#fff;border-radius:3px;box-shadow:0 0 3px rgba(0,0,0,0.05)"></div>
<svg style="left:286px;top:483.79999999999995px" width="60" height="60" viewBox="-30 -30 60 60"><circle r="26.6" fill="none" stroke="#f1f4f6" stroke-width="4.4"/></svg>
<div class="t" style="left:296px;width:40px;text-align:center;top:509.8px;font-size:10px;color:#555">0</div>
<div class="t" style="left:296px;width:40px;text-align:center;top:522.50px;font-size:6.2px;color:#92979e">云桌面</div>
<div class="abs" style="left:363.4px;top:498.9px;width:3.8px;height:3.8px;border-radius:50%;background:#5cb85c"></div><div class="t" style="left:370.7px;top:499.10px;font-size:6.8px;color:#333">正在运行: &nbsp;0</div>
<div class="abs" style="left:363.4px;top:511.7px;width:3.8px;height:3.8px;border-radius:50%;background:#f0a020"></div><div class="t" style="left:370.7px;top:511.90px;font-size:6.8px;color:#333">其他状态: &nbsp;0</div>
<div class="abs" style="left:363.4px;top:524.6px;width:3.8px;height:3.8px;border-radius:50%;background:#e6e8eb"></div><div class="t" style="left:370.7px;top:524.80px;font-size:6.8px;color:#333">关机: &nbsp;0</div>
<div class="abs" style="left:436px;top:457px;width:156.8px;height:110px;background:#fff;border-radius:3px;box-shadow:0 0 3px rgba(0,0,0,0.05)"></div>
<svg style="left:452.8px;top:483.79999999999995px" width="60" height="60" viewBox="-30 -30 60 60"><circle r="26.6" fill="none" stroke="#f1f4f6" stroke-width="4.4"/></svg>
<div class="t" style="left:462.8px;width:40px;text-align:center;top:509.8px;font-size:10px;color:#555">0</div>
<div class="t" style="left:462.8px;width:40px;text-align:center;top:522.80px;font-size:6.2px;color:#92979e">桌面模板</div>
<div class="abs" style="left:529.6px;top:505.6px;width:3.8px;height:3.8px;border-radius:50%;background:#5cb85c"></div><div class="t" style="left:536.9px;top:505.80px;font-size:6.8px;color:#333">已使用: &nbsp;0</div>
<div class="abs" style="left:529.6px;top:518.4px;width:3.8px;height:3.8px;border-radius:50%;background:#e6e8eb"></div><div class="t" style="left:536.9px;top:518.60px;font-size:6.8px;color:#333">未使用: &nbsp;0</div>
<div class="abs" style="left:602.6px;top:457px;width:156.8px;height:110px;background:#fff;border-radius:3px;box-shadow:0 0 3px rgba(0,0,0,0.05)"></div>
<svg style="left:619.8px;top:483.79999999999995px" width="60" height="60" viewBox="-30 -30 60 60"><circle r="26.6" fill="none" stroke="#f1f4f6" stroke-width="4.4"/></svg>
<div class="t" style="left:629.8px;width:40px;text-align:center;top:509.8px;font-size:10px;color:#555">0</div>
<div class="t" style="left:629.8px;width:40px;text-align:center;top:522.80px;font-size:6.2px;color:#92979e">桌面池</div>
<div class="abs" style="left:696.4px;top:505.6px;width:3.8px;height:3.8px;border-radius:50%;background:#5cb85c"></div><div class="t" style="left:703.6999999999999px;top:505.80px;font-size:6.8px;color:#333">已使用: &nbsp;0</div>
<div class="abs" style="left:696.4px;top:518.4px;width:3.8px;height:3.8px;border-radius:50%;background:#e6e8eb"></div><div class="t" style="left:703.6999999999999px;top:518.60px;font-size:6.8px;color:#333">未使用: &nbsp;0</div>

<div class="card" style="left:774.3px;top:362.5px;width:238px;height:200px"></div>
<div class="ttl" style="left:779.5px;top:371.90px">平台告警</div>
<svg style="left:999.5px;top:370.5px" width="7" height="7" viewBox="0 0 14 14"><path d="M2 6.2 A5.1 5.1 0 0 1 11.4 4.2" fill="none" stroke="#444" stroke-width="1.3"/><path d="M12 7.8 A5.1 5.1 0 0 1 2.6 9.8" fill="none" stroke="#444" stroke-width="1.3"/><path d="M12.6 1.6 V5 H9.2 Z" fill="#444"/><path d="M1.4 12.4 V9 H4.8 Z" fill="#444"/></svg>
<div class="soft" style="left:779.5px;top:384px;width:227px;height:120px;background:#fbfcfd"></div>
<div class="t" style="left:789.5px;top:389.2px;font-size:16.5px;font-weight:bold;color:#1a2236">2</div>
<div class="t" style="left:790px;top:409.90px;font-size:6.45px;color:#7d8187">实时告警总数</div>
<svg style="left:898px;top:399.3px" width="92" height="92" viewBox="-46 -46 92 92"><circle r="39.5" fill="none" stroke="#68ba6b" stroke-width="11"/></svg>
<div class="abs" style="left:789.3px;top:427.60px;width:5.4px;height:5.4px;background:#68ba6b"></div><div class="t" style="left:798px;top:428.40px;font-size:6.5px;color:#333">系统</div><div class="t" style="left:852px;width:20.5px;text-align:right;top:428.40px;font-size:6.5px;color:#333">2</div>
<div class="abs" style="left:789.3px;top:440.38px;width:5.4px;height:5.4px;background:#aab8f5"></div><div class="t" style="left:798px;top:441.18px;font-size:6.5px;color:#333">主机</div><div class="t" style="left:852px;width:20.5px;text-align:right;top:441.18px;font-size:6.5px;color:#333">0</div>
<div class="abs" style="left:789.3px;top:453.16px;width:5.4px;height:5.4px;background:#ee8a80"></div><div class="t" style="left:798px;top:453.96px;font-size:6.5px;color:#333">服务</div><div class="t" style="left:852px;width:20.5px;text-align:right;top:453.96px;font-size:6.5px;color:#333">0</div>
<div class="abs" style="left:789.3px;top:465.94px;width:5.4px;height:5.4px;background:#1fd0b0"></div><div class="t" style="left:798px;top:466.74px;font-size:6.5px;color:#333">存储</div><div class="t" style="left:852px;width:20.5px;text-align:right;top:466.74px;font-size:6.5px;color:#333">0</div>
<div class="abs" style="left:789.3px;top:478.72px;width:5.4px;height:5.4px;background:#4aa8e0"></div><div class="t" style="left:798px;top:479.52px;font-size:6.5px;color:#333">虚拟化</div><div class="t" style="left:852px;width:20.5px;text-align:right;top:479.52px;font-size:6.5px;color:#333">0</div>
<div class="abs" style="left:789.3px;top:491.50px;width:5.4px;height:5.4px;background:#ee6a10"></div><div class="t" style="left:798px;top:492.30px;font-size:6.5px;color:#333">网络</div><div class="t" style="left:852px;width:20.5px;text-align:right;top:492.30px;font-size:6.5px;color:#333">0</div>

<div class="abs" style="left:0;top:554.5px;width:1024px;height:21.5px;background:#111"></div>
<div class="abs" style="left:53px;top:554.5px;width:26px;height:21.5px;background:#3a3a3a"></div>
<div class="abs" style="left:53px;top:574.8px;width:26px;height:1.2px;background:#8ab4e8"></div>
<div class="abs" style="left:107px;top:574.8px;width:22px;height:1.2px;background:#8ab4e8"></div>
<svg style="left:8px;top:561px" width="9.5" height="9.5" viewBox="0 0 10 10"><path d="M0 1.4 L4.4 0.8 V4.7 H0 Z M5 0.7 L10 0 V4.7 H5 Z M0 5.3 H4.4 V9.2 L0 8.6 Z M5 5.3 H10 V10 L5 9.3 Z" fill="#fff"/></svg>
<svg style="left:33.5px;top:559px" width="13" height="13" viewBox="-6.5 -6.5 13 13"><path d="M0 0 L0 -6.3 A6.3 6.3 0 0 1 5.5 -3.1 Z" fill="#f7b52c"/><path d="M0 0 L5.5 -3.1 A6.3 6.3 0 0 1 5.5 3.1 Z" fill="#ee4a7a"/><path d="M0 0 L5.5 3.1 A6.3 6.3 0 0 1 0 6.3 Z" fill="#a040d0"/><path d="M0 0 L0 6.3 A6.3 6.3 0 0 1 -5.5 3.1 Z" fill="#3d7df0"/><path d="M0 0 L-5.5 3.1 A6.3 6.3 0 0 1 -5.5 -3.1 Z" fill="#2ec4c0"/><path d="M0 0 L-5.5 -3.1 A6.3 6.3 0 0 1 0 -6.3 Z" fill="#5fd04a"/><circle r="2.6" fill="#fff" opacity="0.85"/></svg>
<svg style="left:59.5px;top:559px" width="13" height="13" viewBox="-6.5 -6.5 13 13"><path d="M0 0 L-5.46 -3.15 A6.3 6.3 0 0 1 5.46 -3.15 Z" fill="#ea4335"/><path d="M0 0 L5.46 -3.15 A6.3 6.3 0 0 1 0 6.3 Z" fill="#fbbc05"/><path d="M0 0 L0 6.3 A6.3 6.3 0 0 1 -5.46 -3.15 Z" fill="#34a853"/><circle r="3" fill="#fff"/><circle r="2.3" fill="#4285f4"/></svg>
<svg style="left:85.5px;top:559px" width="13" height="13" viewBox="-6.5 -6.5 13 13"><circle r="4.4" fill="none" stroke="#2ba4e8" stroke-width="2.6"/><rect x="-3" y="-1" width="8.4" height="2" fill="#2ba4e8"/><rect x="2" y="1" width="4" height="2.6" fill="#111"/><ellipse rx="6.6" ry="2.4" transform="rotate(-32)" fill="none" stroke="#f5c518" stroke-width="1.1"/></svg>
<svg style="left:112px;top:559.5px" width="12" height="11" viewBox="0 0 12 11"><path d="M0 1 H4.4 L5.4 2.2 H12 V10.4 H0 Z" fill="#f2c144"/><rect x="0.8" y="3.6" width="10.4" height="6" fill="#f8dc80"/><rect x="2.2" y="5.4" width="7.6" height="3.4" fill="#3c9be0"/></svg>
<svg style="left:915.5px;top:563px" width="8" height="5" viewBox="0 0 8 5"><path d="M0.6 4.4 L4 1 L7.4 4.4" fill="none" stroke="#fff" stroke-width="0.9"/></svg>
<svg style="left:927.5px;top:561.5px" width="9.5" height="8.5" viewBox="0 0 9.5 8.5"><rect x="2" y="0.4" width="7" height="5" fill="none" stroke="#fff" stroke-width="0.8"/><rect x="0.4" y="1.6" width="2.2" height="4.2" fill="#111" stroke="#fff" stroke-width="0.7"/><path d="M4 7.6 H7.4 M5.6 5.4 V7.6" stroke="#fff" stroke-width="0.8"/></svg>
<svg style="left:940px;top:561.5px" width="10" height="8.5" viewBox="0 0 10 8.5"><path d="M0.4 3 H2 L4.2 0.8 V7.7 L2 5.5 H0.4 Z" fill="none" stroke="#fff" stroke-width="0.7"/><path d="M5.6 2.6 Q6.6 4.25 5.6 5.9 M7 1.6 Q8.6 4.25 7 6.9 M8.4 0.8 Q10.4 4.25 8.4 7.7" fill="none" stroke="#fff" stroke-width="0.6"/></svg>
<div class="t" style="left:953.4px;top:561.6px;font-size:7.6px;font-weight:bold;color:#fff">英</div>
<svg style="left:969px;top:561.5px" width="8.5" height="8" viewBox="0 0 8.5 8"><rect x="0.3" y="0.3" width="7.9" height="7.4" fill="#fff"/><path d="M0.3 2.4 H8.2 M0.3 4.4 H8.2 M0.3 6.2 H5 M2.6 0.3 V6.2 M5 0.3 V7.7 M6.6 2.4 V7.7" stroke="#111" stroke-width="0.6"/></svg>
<div class="t" style="left:981px;width:41px;text-align:center;top:558.6px;font-size:6.4px;color:#fff">9:58</div>
<div class="t" style="left:981px;width:41px;text-align:center;top:568.60px;font-size:6.4px;color:#fff">2024/10/8</div>
<div class="abs" style="left:1021.2px;top:554.5px;width:0.6px;height:21.5px;background:#555"></div>
</body></html>
